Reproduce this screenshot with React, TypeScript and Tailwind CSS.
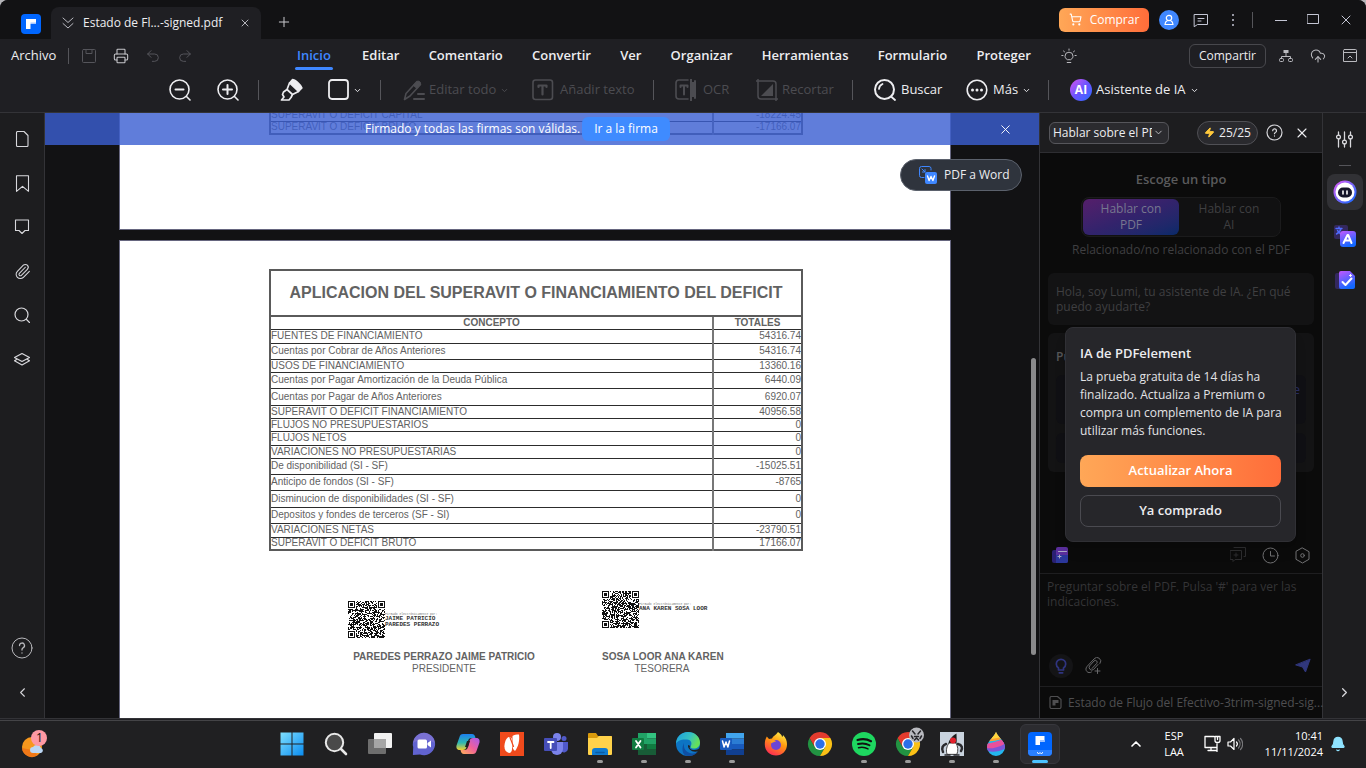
import type { ReactNode } from 'react';
import {
  Bell,
  ChevronDown,
  ChevronLeft,
  ChevronRight,
  ChevronUp,
  CloudUpload,
  Paperclip,
  Plus,
  Printer,
  Redo2,
  ShoppingCart,
  Undo2,
  X,
  Zap,
} from 'lucide-react';

function Svg({ size, box = 24, children, className = '' }: { size: number; box?: number; children: ReactNode; className?: string }) {
  return (
    <svg
      width={size}
      height={size}
      viewBox={`0 0 ${box} ${box}`}
      fill="none"
      stroke="currentColor"
      strokeLinecap="round"
      strokeLinejoin="round"
      className={`shrink-0 ${className}`}
      aria-hidden="true"
    >
      {children}
    </svg>
  );
}

function Divider({ className = '' }: { className?: string }) {
  return <span className={`w-px shrink-0 bg-[#55555a] ${className}`} />;
}

function IconButton({ label, className = '', children }: { label: string; className?: string; children: ReactNode }) {
  return (
    <button type="button" aria-label={label} className={`flex shrink-0 items-center justify-center ${className}`}>
      {children}
    </button>
  );
}

/* ---------- Title bar ---------- */

function TitleBar() {
  return (
    <header className="flex h-[39px] shrink-0 items-center bg-[#121214]">
      <div className="flex w-[51px] shrink-0 items-center justify-end self-stretch pt-2 pr-[10px]">
        <Svg size={20} box={20}>
          <rect width="20" height="20" rx="4" fill="#0066ff" stroke="none" />
          <path d="M5 5h10v5H9.500v5H5z" fill="#fff" stroke="none" />
          <path d="M9.500 8.500H15v1.500H9.500z" fill="#a9c9ff" stroke="none" />
        </Svg>
      </div>
      <div className="mt-auto flex h-8 w-[210px] shrink-0 items-center rounded-t-lg bg-[#1f1f23] pr-1 pl-[10px]">
        <Svg size={14} box={14} className="text-[#b9b9c0]">
          <path d="M2 2l5 4.500L12 2M2 7.500L7 12l5-4.500" />
        </Svg>
        <span className="flex-1 pl-2 text-[12px] whitespace-nowrap text-[#ededf0]">Estado de Fl...-signed.pdf</span>
        <IconButton label="Cerrar pestaña" className="size-6 text-[#b5b5bb]">
          <X size={12} strokeWidth={2} />
        </IconButton>
      </div>
      <IconButton label="Nueva pestaña" className="mt-1 ml-[11px] size-6 text-[#c9c9ce]">
        <Plus size={16} strokeWidth={1.5} />
      </IconButton>
      <div className="ml-auto flex items-center text-[#c4c6d4]">
        <button
          type="button"
          className="flex h-6 w-[90px] items-center justify-center gap-2 rounded-md bg-linear-to-r from-[#ffa757] to-[#ff6d3a] text-[12px] font-medium text-white"
        >
          <ShoppingCart size={13} strokeWidth={2} />
          Comprar
        </button>
        <IconButton label="Cuenta" className="ml-[10px] size-5 rounded-full bg-[#3f87ff] text-white">
          <Svg size={12} box={12}>
            <circle cx="6" cy="4" r="2.700" strokeWidth="1.200" />
            <path d="M4.500 6.500C2.500 7.500 2 9 2 10.500h8c0-1.500-.5-3-2.500-4" strokeWidth="1.200" />
          </Svg>
        </IconButton>
        <IconButton label="Comentarios" className="ml-[10px] size-6">
          <Svg size={16} box={16}>
            <path d="M1.500 2.500h13v10H4.500L1.500 14.500zM5 6.500h6M5 9h3" />
          </Svg>
        </IconButton>
        <IconButton label="Más opciones" className="ml-2 size-6">
          <Svg size={14} box={14}>
            <path d="M7 2v.01M7 7v.01M7 12v.01" strokeWidth="2" />
          </Svg>
        </IconButton>
        <Divider className="mr-2 ml-[7px] h-4" />
        <IconButton label="Minimizar" className="ml-2 size-6">
          <Svg size={12} box={12}>
            <path d="M0 6.500h12" />
          </Svg>
        </IconButton>
        <IconButton label="Maximizar" className="ml-2 size-6">
          <Svg size={13} box={13}>
            <rect x=".5" y="1.500" width="11" height="9" />
          </Svg>
        </IconButton>
        <IconButton label="Cerrar" className="mr-2 ml-[9px] size-6">
          <X size={16} strokeWidth={1.5} />
        </IconButton>
      </div>
    </header>
  );
}

/* ---------- Menu row ---------- */

const MENUS = ['Inicio', 'Editar', 'Comentario', 'Convertir', 'Ver', 'Organizar', 'Herramientas', 'Formulario', 'Proteger'];

function MenuBar() {
  return (
    <div className="flex h-[34px] shrink-0 items-center">
      <button type="button" className="ml-[11px] w-[57px] text-left text-[13px] text-[#ededf0]">
        Archivo
      </button>
      <Divider className="h-4" />
      <div className="flex w-[226px] shrink-0 items-center pl-1">
        <IconButton label="Guardar" className="h-6 w-8 text-[#55555b]">
          <Svg size={16} box={16}>
            <path d="M2.500 1.500h11a1 1 0 0 1 1 1v11a1 1 0 0 1-1 1h-11a1 1 0 0 1-1-1v-11a1 1 0 0 1 1-1zM5 1.500v4h6v-4" />
          </Svg>
        </IconButton>
        <IconButton label="Imprimir" className="h-6 w-8 text-[#c6c6ca]">
          <Printer size={16} strokeWidth={1.6} />
        </IconButton>
        <IconButton label="Deshacer" className="h-6 w-8 text-[#55555b]">
          <Undo2 size={16} strokeWidth={1.5} />
        </IconButton>
        <IconButton label="Rehacer" className="h-6 w-8 text-[#55555b]">
          <Redo2 size={16} strokeWidth={1.5} />
        </IconButton>
      </div>
      <nav className="flex w-[736px] shrink-0 justify-between self-stretch">
        {MENUS.map((name, i) => (
          <a
            key={name}
            href="#"
            className={
              i === 0
                ? 'relative flex items-center px-[2px] text-[13px] font-semibold text-[#3f87ff]'
                : 'flex items-center text-[13px] font-semibold text-[#ededf0]'
            }
          >
            {name}
            {i === 0 && <span className="absolute inset-x-0 bottom-[3px] h-[3px] rounded-full bg-[#3f87ff]" />}
          </a>
        ))}
      </nav>
      <IconButton label="Sugerencias" className="ml-[26px] size-6 text-[#b9b9be]">
        <Svg size={16} box={16}>
          <path d="M6 11.500C4.500 10.500 4 9.300 4 8.200a4 4 0 0 1 8 0c0 1.100-.5 2.300-2 3.300zM6.200 14.500h3.600M8 1v1.200M2.500 3l1 .8M13.500 3l-1 .8M.8 7.500H2M14 7.500h1.200" />
        </Svg>
      </IconButton>
      <div className="ml-auto flex items-center text-[#b9b9be]">
        <button type="button" className="mr-1 h-6 w-[77px] rounded-md border border-[#48484d] text-[12px] font-medium text-[#ededf0]">
          Compartir
        </button>
        <IconButton label="Organigrama" className="h-6 w-8">
          <Svg size={16} box={16}>
            <rect x="5.500" y="2" width="5" height="3" fill="currentColor" stroke="none" />
            <path d="M8 5v3.500M3.500 10.500v-2h9v2" />
            <rect x="1.500" y="10.500" width="4" height="3" rx="1" />
            <rect x="10.500" y="10.500" width="4" height="3" rx="1" />
          </Svg>
        </IconButton>
        <IconButton label="Subir a la nube" className="h-6 w-8">
          <CloudUpload size={16} strokeWidth={1.6} />
        </IconButton>
        <IconButton label="Contraer cinta" className="h-6 w-8">
          <Svg size={16} box={16}>
            <path d="M2.500 1.500h11a1 1 0 0 1 1 1v11h-13v-11a1 1 0 0 1 1-1zM1.500 4.500h13M6 10l2-2 2 2" />
          </Svg>
        </IconButton>
      </div>
    </div>
  );
}

/* ---------- Tool row ---------- */

const toolBtn = 'flex shrink-0 items-center gap-[6px] text-[13px] whitespace-nowrap';

function ToolBar() {
  return (
    <div className="flex h-[39px] shrink-0 items-center pb-[5px] pl-[168px] text-[#ededf0]">
      <IconButton label="Alejar" className="w-6">
        <Svg size={22} box={22}>
          <circle cx="10.500" cy="10.500" r="9.500" strokeWidth="1.600" />
          <path d="M17.500 17.500l3.500 3.500" strokeWidth="1.600" />
          <path d="M6.500 10.500h8" strokeWidth="2" />
        </Svg>
      </IconButton>
      <IconButton label="Acercar" className="ml-6 w-6">
        <Svg size={22} box={22}>
          <circle cx="10.500" cy="10.500" r="9.500" strokeWidth="1.600" />
          <path d="M17.500 17.500l3.500 3.500" strokeWidth="1.600" />
          <path d="M6 10.500h9M10.500 6v9" strokeWidth="2" />
        </Svg>
      </IconButton>
      <Divider className="ml-[18px] h-5" />
      <IconButton label="Resaltar" className="ml-[21px] w-6">
        <Svg size={24}>
          <path d="M12.500 1.500c2.500 0 8.500 5 9.500 8.500l-3.500 3.500L9.500 5z" fill="currentColor" strokeWidth="1.400" />
          <path d="M9.500 5L7 11.500l5.500 5 6-3M7 11.500L3.500 14l-1 2.500L4 19l-2.500 3H9l2-2.500 1.500-3" strokeWidth="1.700" />
        </Svg>
      </IconButton>
      <button type="button" aria-label="Formas" className="ml-6 flex w-9 shrink-0 items-center gap-[3px]">
        <Svg size={22} box={22}>
          <rect x="1" y="1" width="19" height="19" rx="3" strokeWidth="1.800" />
        </Svg>
        <ChevronDown size={9} strokeWidth={2.5} className="shrink-0" />
      </button>
      <Divider className="ml-4 h-5" />
      <button type="button" disabled className={`${toolBtn} ml-[22px] w-[108px] text-[#4c4c51]`}>
        <Svg size={22} box={22}>
          <path d="M1.500 20.500l1.500-6L14 2.500l3.500 3L7 17z" strokeWidth="1.600" />
          <path d="M14 2.500c1-1.500 4.500.5 3.500 3L14 9.500l-3.500-3z" fill="currentColor" />
          <path d="M15 15h6M11 20h10" strokeWidth="2" />
        </Svg>
        <span className="-ml-[2px] flex items-center gap-1">
          Editar todo
          <ChevronDown size={9} strokeWidth={2.5} />
        </span>
      </button>
      <button type="button" disabled className={`${toolBtn} ml-[21px] w-[104px] text-[#4c4c51]`}>
        <Svg size={22} box={22}>
          <rect x="1" y="1" width="19.500" height="19.500" rx="2.500" strokeWidth="1.600" />
          <path d="M6.500 8V6.500h8V8M10.500 6.500v9" strokeWidth="2.200" />
        </Svg>
        Añadir texto
      </button>
      <Divider className="ml-[17px] h-5" />
      <button type="button" disabled className={`${toolBtn} ml-[21px] w-14 text-[#4c4c51]`}>
        <Svg size={22} box={22}>
          <path d="M13 20H4a3 3 0 0 1-3-3V4a3 3 0 0 1 3-3h9M1 5v2M1 14v2" strokeWidth="1.600" />
          <path d="M5.500 8V6.500h7V8M9 6.500v9" strokeWidth="2" />
          <path d="M16 0v22M20 2v17" strokeWidth="2" />
          <path d="M16 3h4v15h-4z" fill="currentColor" stroke="none" />
        </Svg>
        OCR
      </button>
      <button type="button" disabled className={`${toolBtn} ml-[25px] w-[78px] text-[#4c4c51]`}>
        <Svg size={22} box={22}>
          <path d="M0 2h17a3 3 0 0 1 3 3v17M2 0v17a3 3 0 0 0 3 3h17" strokeWidth="1.500" />
          <path d="M17 5v12H5z" fill="currentColor" stroke="none" />
        </Svg>
        <span className="-ml-[2px]">Recortar</span>
      </button>
      <Divider className="ml-[18px] h-5" />
      <button type="button" className={`${toolBtn} ml-[21px] w-[70px]`}>
        <Svg size={22} box={22}>
          <circle cx="10.500" cy="10.500" r="9.500" strokeWidth="2" />
          <path d="M17 17.500l4 3.500M5 10a6 6 0 0 1 3.500-5" strokeWidth="1.800" />
        </Svg>
        <span className="-ml-px">Buscar</span>
      </button>
      <button type="button" className={`${toolBtn} ml-[22px] w-[64px]`}>
        <Svg size={22} box={22}>
          <circle cx="11" cy="11" r="9.800" strokeWidth="1.600" />
          <path d="M6.500 11v.01M11 11v.01M15.500 11v.01" strokeWidth="3" />
        </Svg>
        <span className="-ml-px flex items-center gap-1">
          Más
          <ChevronDown size={9} strokeWidth={2.5} />
        </span>
      </button>
      <Divider className="ml-[18px] h-5" />
      <button type="button" className={`${toolBtn} ml-[21px]`}>
        <span className="flex size-[22px] items-center justify-center rounded-full bg-linear-to-br from-[#d44df0] via-[#6a52ff] to-[#0a6bff] text-[12px] font-bold text-white">
          AI
        </span>
        <span className="-ml-[2px] flex items-center gap-1">
          Asistente de IA
          <ChevronDown size={9} strokeWidth={2.5} />
        </span>
      </button>
    </div>
  );
}

/* ---------- Left rail ---------- */

function LeftRail() {
  const cell = 'h-11 w-full';
  return (
    <aside className="flex w-[45px] shrink-0 flex-col border-r border-[#333337] bg-[#1d1d1f] py-1 text-[#d8d8dc]">
      <IconButton label="Miniaturas" className={cell}>
        <Svg size={16} box={16}>
          <path d="M3.500 .5h6.500l4 4v10a1 1 0 0 1-1 1H3.500a1 1 0 0 1-1-1v-13a1 1 0 0 1 1-1z" strokeWidth="1.100" />
        </Svg>
      </IconButton>
      <IconButton label="Marcadores" className={cell}>
        <Svg size={17} box={17}>
          <path d="M2.500 .8h12v15.500l-6-5-6 5z" strokeWidth="1.100" />
        </Svg>
      </IconButton>
      <IconButton label="Comentarios" className={cell}>
        <Svg size={16} box={16}>
          <path d="M1.500 1h13v10.500H11L8 14.500l-3-3H1.500z" strokeWidth="1.100" />
        </Svg>
      </IconButton>
      <IconButton label="Adjuntos" className={cell}>
        <Paperclip size={17} strokeWidth={1.5} />
      </IconButton>
      <IconButton label="Buscar" className={cell}>
        <Svg size={16} box={16}>
          <circle cx="7.500" cy="7.500" r="6.500" strokeWidth="1.200" />
          <path d="M12.500 12.500l3 3" strokeWidth="1.200" />
        </Svg>
      </IconButton>
      <IconButton label="Capas" className={cell}>
        <Svg size={16} box={16}>
          <path d="M8 2.500l7.500 4L8 10.500l-7.500-4zM3 8.300L.5 9.800 8 14l7.500-4.200L13 8.300" strokeWidth="1.200" />
        </Svg>
      </IconButton>
      <div className="mt-auto" />
      <IconButton label="Ayuda" className={cell}>
        <Svg size={22} box={22} className="text-[#b8b8bc]">
          <circle cx="11" cy="11" r="10" />
          <path d="M8.500 8.500a2.500 2.500 0 1 1 3.500 2.300c-.8.400-1 .8-1 1.700v.5M11 16v.01" strokeWidth="1.300" />
        </Svg>
      </IconButton>
      <IconButton label="Contraer" className={cell}>
        <ChevronLeft size={15} strokeWidth={1.7} />
      </IconButton>
    </aside>
  );
}

/* ---------- Document ---------- */

type Row = { name: string; value: string; height: string };

const PREVIOUS_ROWS: Row[] = [
  { name: 'SUPERAVIT O DEFICIT CAPITAL', value: '-18224.45', height: 'h-[13px]' },
  { name: 'SUPERAVIT O DEFICIT BRUTO', value: '-17166.07', height: 'h-[13px]' },
];

const ROWS: Row[] = [
  { name: 'FUENTES DE FINANCIAMIENTO', value: '54316.74', height: 'h-[14px]' },
  { name: 'Cuentas por Cobrar de Años Anteriores', value: '54316.74', height: 'h-[16px]' },
  { name: 'USOS DE FINANCIAMIENTO', value: '13360.16', height: 'h-[13px]' },
  { name: 'Cuentas por Pagar Amortización de la Deuda Pública', value: '6440.09', height: 'h-[16px]' },
  { name: 'Cuentas por Pagar de Años Anteriores', value: '6920.07', height: 'h-[17px]' },
  { name: 'SUPERAVIT O DEFICIT FINANCIAMIENTO', value: '40956.58', height: 'h-[13px]' },
  { name: 'FLUJOS NO PRESUPUESTARIOS', value: '0', height: 'h-[13px]' },
  { name: 'FLUJOS NETOS', value: '0', height: 'h-[14px]' },
  { name: 'VARIACIONES NO PRESUPUESTARIAS', value: '0', height: 'h-[13px]' },
  { name: 'De disponibilidad (SI - SF)', value: '-15025.51', height: 'h-[16px]' },
  { name: 'Anticipo de fondos (SI - SF)', value: '-8765', height: 'h-[16px]' },
  { name: 'Disminucion de disponibilidades (SI - SF)', value: '0', height: 'h-[17px]' },
  { name: 'Depositos y fondes de terceros (SF - SI)', value: '0', height: 'h-[16px]' },
  { name: 'VARIACIONES NETAS', value: '-23790.51', height: 'h-[14px]' },
  { name: 'SUPERAVIT O DEFICIT BRUTO', value: '17166.07', height: 'h-[13px]' },
];

function TableRows({ rows }: { rows: Row[] }) {
  return (
    <>
      {rows.map((r) => (
        <tr key={r.name} className={r.height}>
          <td className="border-y border-[#2c2c2c] p-0">{r.name}</td>
          <td className="border-y border-l-2 border-y-[#2c2c2c] border-l-[#777] p-0 text-right">{r.value}</td>
        </tr>
      ))}
    </>
  );
}

const tableClass =
  "ml-[149px] w-[534px] table-fixed border-collapse border-2 border-[#5a5a5a] font-['Liberation_Sans',Arial,sans-serif] text-[10px] leading-[10px] text-[#626262]";

function QrCode({ seed, label }: { seed: number; label: string }) {
  const n = 37;
  let s = seed;
  let d = '';
  const inFinder = (x: number, y: number) => (x < 8 && y < 8) || (x > n - 9 && y < 8) || (x < 8 && y > n - 9);
  for (let y = 0; y < n; y++) {
    for (let x = 0; x < n; x++) {
      s = (s * 1103515245 + 12345) % 2147483648;
      if (!inFinder(x, y) && s / 2147483648 > 0.46) d += `M${x} ${y}h1v1h-1z`;
    }
  }
  const finders = [
    [0, 0],
    [n - 7, 0],
    [0, n - 7],
  ];
  return (
    <svg width="37" height="37" viewBox="0 0 37 37" role="img" aria-label={label} className="shrink-0">
      <path d={d} fill="#111" />
      {finders.map(([x, y]) => (
        <g key={`${x}-${y}`}>
          <rect x={x + 0.5} y={y + 0.5} width="6" height="6" fill="none" stroke="#111" />
          <rect x={x + 2} y={y + 2} width="3" height="3" fill="#111" />
        </g>
      ))}
    </svg>
  );
}

function Signature({ seed, lines, name, role, className }: { seed: number; lines: string[]; name: string; role: string; className: string }) {
  return (
    <div className={`flex shrink-0 flex-col ${className}`}>
      <div className="flex">
        <QrCode seed={seed} label={`Código de firma de ${name}`} />
        <div className="pt-3 font-['Liberation_Mono',monospace] text-[6px] leading-[6px] font-bold whitespace-nowrap text-[#333]">
          <p className="text-[3px] leading-[3px] font-normal text-[#777]">Firmado electrónicamente por:</p>
          {lines.map((l) => (
            <p key={l}>{l}</p>
          ))}
        </div>
      </div>
      <div className="mt-auto text-center text-[10px] leading-3 whitespace-nowrap text-[#626262]">
        <p className="font-bold">{name}</p>
        <p>{role}</p>
      </div>
    </div>
  );
}

function DocumentArea() {
  return (
    <main className="relative min-w-0 flex-1 overflow-hidden bg-[#121214]">
      <div className="flex h-full flex-col gap-[10px] pr-[88px] pl-[74px] font-['Liberation_Sans',Arial,sans-serif]">
        <section className="h-[117px] shrink-0 overflow-hidden border border-t-0 border-[#66667f] bg-white">
          <table className={`${tableClass} -mt-[6px]`}>
            <colgroup>
              <col />
              <col className="w-[89px]" />
            </colgroup>
            <tbody>
              <TableRows rows={PREVIOUS_ROWS} />
            </tbody>
          </table>
        </section>
        <section className="flex min-h-0 flex-1 flex-col overflow-hidden border border-b-0 border-[#66667f] bg-white pt-7">
          <table className={tableClass}>
            <colgroup>
              <col />
              <col className="w-[89px]" />
            </colgroup>
            <thead>
              <tr className="h-[46px]">
                <th colSpan={2} className="border-b-2 border-[#5a5a5a] p-0 text-[16px] font-bold">
                  APLICACION DEL SUPERAVIT O FINANCIAMIENTO DEL DEFICIT
                </th>
              </tr>
              <tr className="h-[13px]">
                <th className="border-b border-[#2c2c2c] p-0">CONCEPTO</th>
                <th className="border-b border-l-2 border-b-[#2c2c2c] border-l-[#777] p-0">TOTALES</th>
              </tr>
            </thead>
            <tbody>
              <TableRows rows={ROWS} />
            </tbody>
          </table>
          <div className="flex pt-10 pl-[228px]">
            <Signature
              seed={7}
              lines={['JAIME PATRICIO', 'PAREDES PERRAZO']}
              name="PAREDES PERRAZO JAIME PATRICIO"
              role="PRESIDENTE"
              className="mr-[62px] h-[84px] w-[192px] pt-[10px]"
            />
            <Signature
              seed={91}
              lines={['ANA KAREN SOSA LOOR']}
              name="SOSA LOOR ANA KAREN"
              role="TESORERA"
              className="h-[84px] w-[120px]"
            />
          </div>
        </section>
      </div>

      <div role="status" className="absolute inset-x-0 top-0 flex h-8 items-center bg-[#3b5fd1]/81 pl-[320px] text-[12px] text-white">
        <span className="w-[217px] shrink-0 whitespace-nowrap">Firmado y todas las firmas son válidas.</span>
        <button type="button" className="h-6 w-[88px] rounded-md bg-[#3f8bff] font-medium">
          Ir a la firma
        </button>
        <IconButton label="Cerrar aviso" className="mr-[22px] ml-auto size-6">
          <X size={15} strokeWidth={1.5} />
        </IconButton>
      </div>

      <button
        type="button"
        className="absolute top-[46px] right-[17px] flex h-8 w-[122px] items-center gap-[7px] rounded-full border border-[#5b616c] bg-[#2f343d] pl-[18px] text-[12px] whitespace-nowrap text-[#ededf0]"
      >
        <Svg size={18} box={18}>
          <path d="M5 11.500H2.500a2 2 0 0 1-2-2V2.500a2 2 0 0 1 2-2H10a2 2 0 0 1 2 2V4M3 3l3 3M6 3.500V6H3.500" stroke="#3f87ff" />
          <rect x="6" y="6" width="12" height="12" rx="2" fill="#3f87ff" stroke="none" />
          <path d="M8.500 10l1.600 4.500L12 10.500l1.900 4L15.500 10" stroke="#fff" strokeWidth="1.400" />
        </Svg>
        PDF a Word
      </button>

      <span aria-hidden="true" className="absolute top-[245px] right-[3px] h-[297px] w-[5px] rounded-full bg-[#8a8a8c]" />
    </main>
  );
}

/* ---------- AI panel ---------- */

function UpgradeDialog() {
  return (
    <div
      role="dialog"
      aria-labelledby="upgrade-title"
      className="absolute top-[214px] left-[25px] flex h-[215px] w-[231px] flex-col rounded-lg border border-[#303035] bg-[#26262a] px-[14px] pt-4 pb-[14px] shadow-lg"
    >
      <h2 id="upgrade-title" className="text-[13px] leading-[18px] font-semibold text-[#ededf0]">
        IA de PDFelement
      </h2>
      <p className="mt-[6px] text-[12px] leading-[18px] whitespace-nowrap text-[#e3e3e6]">
        La prueba gratuita de 14 días ha
        <br />
        finalizado. Actualiza a Premium o
        <br />
        compra un complemento de IA para
        <br />
        utilizar más funciones.
      </p>
      <button
        type="button"
        className="mt-auto h-8 shrink-0 rounded-lg bg-linear-to-r from-[#ffa757] to-[#ff6d3a] text-[13px] font-semibold text-white"
      >
        Actualizar Ahora
      </button>
      <button type="button" className="mt-2 h-8 shrink-0 rounded-lg border border-[#4a4a50] text-[13px] font-semibold text-[#ededf0]">
        Ya comprado
      </button>
    </div>
  );
}

function AiPanel() {
  return (
    <section className="relative flex w-[283px] shrink-0 flex-col border-l border-[#333337] bg-[#0b0b0b]">
      <div className="flex h-10 shrink-0 items-center border-b border-[#2e2e32] bg-[#1d1d1f] pl-[9px]">
        <div className="relative flex items-center">
          <select
            aria-label="Modo de chat"
            className="h-[22px] w-[120px] appearance-none rounded-md border border-[#56565b] bg-[#2b2b2f] pr-4 pl-[3px] text-[12px] leading-4 text-[#ededf0]"
          >
            <option>Hablar sobre el PDF</option>
          </select>
          <ChevronDown size={11} strokeWidth={2} className="pointer-events-none absolute right-[5px] text-[#c4c4c8]" />
        </div>
        <button
          type="button"
          className="ml-7 flex h-6 w-[61px] items-center justify-center gap-1 rounded-full border border-[#505055] bg-[#2a2a2e] text-[12px] text-[#ededf0]"
        >
          <Zap size={11} fill="#ffc93c" className="text-[#ffc93c]" />
          25/25
        </button>
        <IconButton label="Ayuda" className="ml-1 size-6 text-[#d6d6da]">
          <Svg size={17} box={17}>
            <circle cx="8.500" cy="8.500" r="7.500" strokeWidth="1.200" />
            <path d="M6.700 6.700a1.900 1.900 0 1 1 2.700 1.800c-.7.300-.9.600-.9 1.200M8.500 12v.01" strokeWidth="1.300" />
          </Svg>
        </IconButton>
        <IconButton label="Cerrar panel" className="ml-1 size-6 text-[#ededf0]">
          <X size={16} strokeWidth={1.7} />
        </IconButton>
      </div>

      <div className="flex flex-1 flex-col px-2 text-[12px] text-[#3f3f41]">
        <h2 className="pt-4 text-center text-[13px] leading-5 font-semibold text-[#5a5a5c]">Escoge un tipo</h2>
        <div className="mx-auto mt-2 flex h-10 w-[200px] rounded-lg border border-[#1b1b1c] bg-[#111112] p-px leading-4">
          <button type="button" className="w-24 rounded-md bg-linear-to-br from-[#551e6b] via-[#33236c] to-[#072a69] text-[#77778f]">
            Hablar con
            <br />
            PDF
          </button>
          <button type="button" className="flex-1">
            Hablar con
            <br />
            AI
          </button>
        </div>
        <p className="mt-1 text-center leading-[18px] whitespace-nowrap">Relacionado/no relacionado con el PDF</p>
        <p className="mt-[14px] rounded-md bg-[#131314] px-2 py-[11px] leading-[15px] whitespace-nowrap">
          Hola, soy Lumi, tu asistente de IA. ¿En qué
          <br />
          puedo ayudarte?
        </p>
        <div className="mt-2 h-[139px] rounded-md bg-[#131314] px-2 pt-[15px]">
          <p className="leading-[18px] font-semibold text-[#565658]">Pu</p>
          <div className="mt-[9px] h-[49px] rounded-md bg-[#101014] px-[6px] pt-[6px] text-right leading-[18px] text-[#2a2f66]">e</div>
          <div className="mt-[9px] h-[30px] rounded-md bg-[#101014]" />
        </div>
        <div className="mt-auto flex h-9 items-center text-[#717173]">
          <IconButton label="Indicaciones" className="ml-1 size-4">
            <Svg size={16} box={16}>
              <rect x="0" y="3" width="8" height="13" rx="2" fill="#2a2173" stroke="none" />
              <path d="M6 0h8a2 2 0 0 1 2 2v12a2 2 0 0 1-2 2H4V2a2 2 0 0 1 2-2z" fill="#5a2f9c" stroke="none" />
              <path d="M4 8h12v6a2 2 0 0 1-2 2H4z" fill="#173a9b" stroke="none" opacity=".7" />
              <path d="M6.500 4.500h8" stroke="#a9a9c4" />
              <path d="M7.500 8v3M6 9.500h3" stroke="#a9a9c4" />
            </Svg>
          </IconButton>
          <IconButton label="Nuevo chat" className="ml-auto h-6 w-8 text-[#2d2d2f]">
            <Svg size={16} box={16}>
              <path d="M.5 3.500h11v9H5l-2 2v-2H.5zM4 .5h11.500v9H14M6 6v4M4 8h4" />
            </Svg>
          </IconButton>
          <IconButton label="Historial" className="h-6 w-8">
            <Svg size={17} box={17}>
              <circle cx="8.500" cy="8.500" r="7.500" />
              <path d="M8.500 4.500v4.500h4" />
            </Svg>
          </IconButton>
          <IconButton label="Ajustes" className="-mr-1 h-6 w-8">
            <Svg size={17} box={17}>
              <path d="M8.500 1l6.500 3.700v7.600L8.500 16 2 12.300V4.700z" />
              <circle cx="8.500" cy="8.500" r="1.800" />
            </Svg>
          </IconButton>
        </div>
      </div>

      <div className="flex h-[113px] shrink-0 flex-col border-t border-[#1e1e20] px-[7px] pt-[5px]">
        <textarea
          aria-label="Pregunta"
          placeholder={"Preguntar sobre el PDF. Pulsa '#' para ver las\nindicaciones."}
          className="w-full flex-1 resize-none overflow-hidden bg-transparent text-[12px] leading-[15px] whitespace-pre text-[#737375] placeholder:text-[#343436]"
        />
        <div className="flex h-9 items-center pb-1">
          <IconButton label="Ideas" className="ml-[2px] size-6 rounded-full bg-[#141416] text-[#2f347f]">
            <Svg size={16} box={16}>
              <path d="M5.500 10C4 9 3.300 7.500 3.300 6a4.700 4.700 0 0 1 9.400 0c0 1.500-.7 3-2.200 4v2h-5zM6.300 14.800h3.400" strokeWidth="1.700" />
            </Svg>
          </IconButton>
          <IconButton label="Adjuntar" className="ml-2 size-6 text-[#68686a]">
            <Svg size={18} box={18}>
              <path d="M14 7.500L9.500 12.500a2.700 2.700 0 0 1-4-3.500L10 4a1.800 1.800 0 0 1 2.700 2.400L8 11.500M16 6.500a3.500 3.500 0 0 0-6-4.500L3 9.500c-3 3.500 1 8 4.500 5.500M13.500 11.500v5M11 14h5" />
            </Svg>
          </IconButton>
          <IconButton label="Enviar" className="ml-auto size-6 text-[#30377c]">
            <Svg size={16} box={16}>
              <path d="M15 1.500L10.500 14 7.500 9 1 7z" fill="currentColor" />
            </Svg>
          </IconButton>
        </div>
      </div>

      <div className="flex h-8 shrink-0 items-center gap-[6px] border-t border-[#1e1e20] px-[9px] text-[#4e4e50]">
        <Svg size={13} box={13}>
          <path d="M2.500 .5h6l3.500 3v7.500a1.500 1.500 0 0 1-1.500 1.500h-8A1.500 1.500 0 0 1 1 11V2A1.500 1.500 0 0 1 2.500 .5z" strokeWidth="1.200" />
          <path d="M3.500 4h6v3h-3v2.500h-3z" fill="currentColor" stroke="none" />
        </Svg>
        <span className="text-[12px] whitespace-nowrap">Estado de Flujo del Efectivo-3trim-signed-sig...</span>
      </div>
      <UpgradeDialog />
    </section>
  );
}

/* ---------- Right rail ---------- */

function RightRail() {
  return (
    <aside className="flex w-11 shrink-0 flex-col items-center border-l border-[#333337] bg-[#1d1d1f] py-1">
      <IconButton label="Propiedades" className="h-11 w-full text-[#d8d8dc]">
        <Svg size={17} box={17}>
          <path d="M2.500 1v3M2.500 8v8M8.500 1v8M8.500 13v3M14.500 1v3M14.500 8v8" strokeWidth="1.300" />
          <circle cx="2.500" cy="6" r="1.900" strokeWidth="1.300" />
          <circle cx="8.500" cy="11" r="1.900" strokeWidth="1.300" />
          <circle cx="14.500" cy="6" r="1.900" strokeWidth="1.300" />
        </Svg>
      </IconButton>
      <span className="mt-1 h-px w-3 bg-[#55555a]" />
      <IconButton label="Lumi" className="mt-2 size-9 rounded-lg bg-[#313135]">
        <Svg size={24}>
          <defs>
            <linearGradient id="lumi" x1="0" y1="0" x2="1" y2="1">
              <stop offset="0" stopColor="#e45cf5" />
              <stop offset="1" stopColor="#0a6bff" />
            </linearGradient>
          </defs>
          <circle cx="12" cy="12" r="11.500" fill="url(#lumi)" stroke="none" />
          <circle cx="12" cy="12" r="9.500" fill="#fff" stroke="none" />
          <rect x="5" y="7.500" width="14" height="10" rx="5" fill="#16162a" stroke="none" />
          <path d="M10 11v3M14 11v3" stroke="#fff" strokeWidth="1.600" />
        </Svg>
      </IconButton>
      <IconButton label="Traducir" className="mt-1 h-11 w-full">
        <Svg size={22} box={22}>
          <defs>
            <linearGradient id="tool" x1="0" y1="0" x2=".4" y2="1">
              <stop offset="0" stopColor="#c457ff" />
              <stop offset="1" stopColor="#1268ff" />
            </linearGradient>
          </defs>
          <rect width="14" height="14" rx="2" fill="#33285e" stroke="none" />
          <path d="M2 3.500h6M5 2v1.500M7 3.500C6.500 6 4.500 8 2.500 9M3.500 5.500L6.500 9" stroke="#4f6bff" strokeWidth="1.400" />
          <rect x="6" y="6" width="16" height="16" rx="3" fill="url(#tool)" stroke="none" />
          <path d="M9.500 18l4-8h.7l3.300 8M11 15.500h5" stroke="#fff" strokeWidth="2" />
        </Svg>
      </IconButton>
      <IconButton label="Revisar" className="h-11 w-full">
        <Svg size={20} box={20}>
          <rect x="0" y="3" width="10" height="16" rx="2" fill="#33285e" stroke="none" />
          <path d="M6 1h9l5 5v11a2 2 0 0 1-2 2H6a2 2 0 0 1-2-2V3a2 2 0 0 1 2-2z" fill="url(#tool)" stroke="none" />
          <path d="M7.500 12l3 3 6-6.500" stroke="#fff" strokeWidth="2" />
          <path d="M15.500 4.500v2M14.500 5.500h2" stroke="#fff" />
        </Svg>
      </IconButton>
      <IconButton label="Expandir" className="mt-auto h-11 w-full text-[#d8d8dc]">
        <ChevronRight size={15} strokeWidth={2} />
      </IconButton>
    </aside>
  );
}

/* ---------- Taskbar ---------- */

function Chrome() {
  return (
    <>
      <path d="M1.600 6A12 12 0 0 0 12 24l5.200-9L12 12 6.800 15z" fill="#229342" stroke="none" />
      <path d="M1.600 6A12 12 0 0 1 22.400 6H12l-5.200 9z" fill="#e33b2e" stroke="none" />
      <path d="M22.400 6A12 12 0 0 1 12 24l5.200-9L12 6z" fill="#fbc116" stroke="none" />
      <circle cx="12" cy="12" r="6" fill="#fff" stroke="none" />
      <circle cx="12" cy="12" r="4.700" fill="#2b6fe8" stroke="none" />
    </>
  );
}

type App = { name: string; art: ReactNode; open?: boolean; active?: boolean };

const APPS: App[] = [
  {
    name: 'Inicio',
    art: (
      <>
        <defs>
          <linearGradient id="win" x1="0" y1="0" x2="1" y2="1">
            <stop offset="0" stopColor="#7fe0ff" />
            <stop offset="1" stopColor="#0a8cf0" />
          </linearGradient>
        </defs>
        <path d="M.5 .5h11v11H.5zM12.500 .5h11v11h-11zM.5 12.500h11v11H.5zM12.500 12.500h11v11h-11z" fill="url(#win)" stroke="none" />
      </>
    ),
  },
  {
    name: 'Buscar',
    art: (
      <>
        <circle cx="10.500" cy="10.500" r="8.700" fill="#4a4a4a" stroke="#e8e8e8" strokeWidth="2" />
        <path d="M17 17l5 5" stroke="#e8e8e8" strokeWidth="2.600" />
      </>
    ),
  },
  {
    name: 'Vista de tareas',
    art: (
      <>
        <rect x="6" y="1" width="18" height="15" rx="1" fill="#f2f2f2" stroke="none" />
        <rect x="0" y="7" width="18" height="15" rx="1" fill="#6e6e6e" stroke="none" />
        <path d="M6 7h12v9H6z" fill="#a6a6a6" stroke="none" />
      </>
    ),
  },
  {
    name: 'Chat',
    art: (
      <>
        <path d="M12 .8A11.200 11.200 0 1 1 8 22.500L.9 23 1.200 15A11.200 11.200 0 0 1 12 .8z" fill="#6163d0" stroke="none" />
        <path d="M12 .8A11.200 11.200 0 0 0 1 11c5-4 15-4 22 0A11.200 11.200 0 0 0 12 .8z" fill="#8a7bd6" stroke="none" opacity=".6" />
        <rect x="5.500" y="7.500" width="9.500" height="9" rx="1.500" fill="#fff" stroke="none" />
        <path d="M15.500 11l3.500-2.500v7L15.500 13z" fill="#fff" stroke="none" />
      </>
    ),
  },
  {
    name: 'Copilot',
    art: (
      <>
        <defs>
          <linearGradient id="cpa" x1="0" y1="0" x2="0" y2="1">
            <stop offset="0" stopColor="#1c7ff0" />
            <stop offset=".55" stopColor="#2fb8b0" />
            <stop offset="1" stopColor="#f3d02e" />
          </linearGradient>
          <linearGradient id="cpb" x1="1" y1="0" x2="0" y2="1">
            <stop offset="0" stopColor="#a65bf0" />
            <stop offset=".5" stopColor="#f0609a" />
            <stop offset="1" stopColor="#ffb357" />
          </linearGradient>
        </defs>
        <path d="M7 2h9c2 0 3 1.500 3.500 4h-4c-2 0-3 1-3.500 3l-1.500 6c-.5 2-1.500 3-3.500 3H4c-3 0-4-2-3.500-4.500L3.500 5C4 3 5 2 7 2z" fill="url(#cpa)" stroke="none" />
        <path d="M17 6h3c3 0 4 2 3.500 4.500L20.500 19c-.6 2-1.600 3-3.500 3H8c-2 0-3-1.500-3.500-4h4c2 0 3-1 3.500-3l1.500-6c.5-2 1.500-3 3.500-3z" fill="url(#cpb)" stroke="none" />
        <path d="M11 9h3l-2 6H9z" fill="#202020" stroke="none" />
      </>
    ),
  },
  {
    name: 'Nitro',
    art: (
      <>
        <rect width="24" height="24" fill="#f04a1c" stroke="none" />
        <path d="M9 5c2 0 3 1 3 3v9c0 2-1 4-3 4-3.500-1-5-4-4.500-8C5 9 6.500 5.500 9 5z" fill="#fff" stroke="none" />
        <path d="M12.500 4c1.500-1.500 4-1.500 6.500-1.500.7 6-.5 12-4 16.500-1.500-1-2.500-3-2.500-5z" fill="#fff" stroke="none" />
        <path d="M10 5.500l3.500 9" stroke="#f04a1c" strokeWidth="1.200" />
      </>
    ),
  },
  {
    name: 'Teams',
    art: (
      <>
        <circle cx="20" cy="6.500" r="2.500" fill="#5059c9" stroke="none" />
        <circle cx="13" cy="5" r="4" fill="#7b83eb" stroke="none" />
        <path d="M17 10h7v7a4 4 0 0 1-7 2z" fill="#5059c9" stroke="none" />
        <path d="M7 10h12v7a6 6 0 0 1-12 0z" fill="#7b83eb" stroke="none" />
        <rect x="0" y="6" width="13" height="13" rx="1" fill="#464eb8" stroke="none" />
        <path d="M4 10h5.500M6.700 10v6" stroke="#fff" strokeWidth="1.800" />
      </>
    ),
  },
  {
    name: 'Explorador de archivos',
    open: true,
    art: (
      <>
        <path d="M0 2a1 1 0 0 1 1-1h7l2 3h13a1 1 0 0 1 1 1v6H0z" fill="#d99a0c" stroke="none" />
        <path d="M0 6h9l2-2h12a1 1 0 0 1 1 1v17a1 1 0 0 1-1 1H1a1 1 0 0 1-1-1z" fill="#ffd24a" stroke="none" />
        <path d="M4 23v-4a3 3 0 0 1 3-3h10a3 3 0 0 1 3 3v4z" fill="#0f7bd0" stroke="none" />
        <path d="M8 20.500h8" stroke="#0a5ba3" strokeWidth="1.500" />
      </>
    ),
  },
  {
    name: 'Excel',
    open: true,
    art: (
      <>
        <path d="M6 1h9v11H6z" fill="#21a366" stroke="none" />
        <path d="M15 1h9v5.500h-9z" fill="#33c481" stroke="none" />
        <path d="M15 6.500h9V12h-9z" fill="#21a366" stroke="none" />
        <path d="M6 12h9v5.500H6zM6 17.500h18V23H6z" fill="#185c37" stroke="none" />
        <path d="M15 12h9v5.500h-9z" fill="#107c41" stroke="none" />
        <rect x="0" y="6" width="12" height="12" rx="1" fill="#107c41" stroke="none" />
        <path d="M4 9l4.500 6.500M8.500 9L4 15.500" stroke="#fff" strokeWidth="1.800" />
      </>
    ),
  },
  {
    name: 'Edge',
    open: true,
    art: (
      <>
        <defs>
          <linearGradient id="edge" x1="0" y1="0" x2="1" y2=".4">
            <stop offset="0" stopColor="#1b9de2" />
            <stop offset=".6" stopColor="#35c1c1" />
            <stop offset="1" stopColor="#66e05a" />
          </linearGradient>
        </defs>
        <circle cx="12" cy="12" r="12" fill="#0d74c4" stroke="none" />
        <path d="M0 12C0 5 5 0 12 0s12 5 12 10.500c0 4-3 6-6 6-3.500 0-4-1.500-3-3 1-2 .5-5.500-4-6C5 7 1 9 0 12z" fill="url(#edge)" stroke="none" />
        <path d="M8 11c-1 5 2 10 8 10.500 3 .3 5-1 6.500-2.500A12 12 0 0 1 12 24C5 24 6 14 8 11z" fill="#0f4fa3" stroke="none" />
        <path d="M14.500 14c-2 2 0 4 4 4 2 0 4-.8 5-2l-1 3c-5 2-11-1-10.500-6z" fill="#202020" stroke="none" />
      </>
    ),
  },
  {
    name: 'Word',
    open: true,
    art: (
      <>
        <path d="M6 1h18v5.500H6z" fill="#41a5ee" stroke="none" />
        <path d="M6 6.500h18V12H6z" fill="#2b7cd3" stroke="none" />
        <path d="M6 12h18v5.500H6z" fill="#185abd" stroke="none" />
        <path d="M6 17.500h18V23H6z" fill="#103f91" stroke="none" />
        <rect x="0" y="6" width="12" height="12" rx="1" fill="#185abd" stroke="none" />
        <path d="M2.500 9l1.600 6L6 10l1.900 5 1.600-6" stroke="#fff" strokeWidth="1.500" />
      </>
    ),
  },
  {
    name: 'Firefox',
    art: (
      <>
        <defs>
          <linearGradient id="fx" x1=".8" y1="0" x2=".3" y2="1">
            <stop offset="0" stopColor="#fff44f" />
            <stop offset=".45" stopColor="#ff980e" />
            <stop offset="1" stopColor="#ff2a55" />
          </linearGradient>
        </defs>
        <path d="M14 0c3 2 4 3.500 4 5 1-.5 1-1.500 1-2 3 3 4 6 4 9.500C23 19 18 23.500 12 23.500S.8 19 .8 12.500c0-3 .5-5.500 2-8L5 7l3-.5C9 4 12 3 14 0z" fill="url(#fx)" stroke="none" />
        <circle cx="12" cy="13" r="5" fill="#6b45d6" stroke="none" />
        <path d="M6 8c3-1.500 5 0 6 1.500-2 0-3 1.500-5 1.500z" fill="#ff9d1e" stroke="none" />
      </>
    ),
  },
  { name: 'Chrome', art: <Chrome /> },
  {
    name: 'Spotify',
    open: true,
    art: (
      <>
        <circle cx="12" cy="12" r="12" fill="#1ed760" stroke="none" />
        <path d="M5.500 8c4.500-1.300 9.500-1 13.500 1.200" stroke="#111" strokeWidth="2.200" />
        <path d="M6 12c4-1 8-.7 11.500 1.300" stroke="#111" strokeWidth="1.900" />
        <path d="M6.500 15.700c3.500-.8 6.500-.5 9.500 1.200" stroke="#111" strokeWidth="1.500" />
      </>
    ),
  },
  {
    name: 'Chrome, perfil 2',
    open: true,
    art: (
      <>
        <Chrome />
        <circle cx="20.500" cy="3" r="7.500" fill="#b9bac0" stroke="none" />
        <path d="M16.500 -1l2.500 3M24.500 -1l-2.500 3M18.500 4.500h4M18.500 8l2-2 2 2M15.500 4l1.500 2.500M25.500 4L24 6.500" stroke="#26262a" strokeWidth="1.500" />
      </>
    ),
  },
  {
    name: 'Java',
    open: true,
    art: (
      <>
        <rect width="24" height="24" fill="#c9d3de" stroke="none" />
        <path d="M3 20c-2-4 0-7 3-8M21 19c2-3 1-6-3-7" stroke="#2a2a2e" strokeWidth="2.500" />
        <path d="M7 22c-1.500-4 0-8 2-11h7c2 4 2.500 7 1 11z" fill="#fff" stroke="#444" />
        <path d="M8.500 11c1-4 5-8 8-9.500 0 4 .5 6.500 0 9.500z" fill="#1b1b1b" stroke="none" />
        <circle cx="13" cy="8.500" r="3" fill="#e3202c" stroke="none" />
        <path d="M5 23h5M14 23h5" stroke="#2a2a2e" strokeWidth="1.500" />
      </>
    ),
  },
  {
    name: 'Paint 3D',
    open: true,
    art: (
      <>
        <defs>
          <clipPath id="drop">
            <path d="M12 0c1 4 9 9 9 15a9 9 0 0 1-18 0C3 9 11 4 12 0z" />
          </clipPath>
        </defs>
        <g clipPath="url(#drop)" stroke="none">
          <rect width="24" height="24" fill="#23b6ee" />
          <path d="M0 14c6 0 12 1 24-7v8c-8 5-16 6-24 3z" fill="#7d55d8" />
          <path d="M0 11c6 1 12-1 24-6v5c-10 6-16 7-24 6z" fill="#e8509c" />
          <path d="M0 0h24v5C16 8 12 9 0 10z" fill="#ffa02e" />
          <path d="M6 0h12v5L8 7z" fill="#ffd53d" />
        </g>
      </>
    ),
  },
  {
    name: 'PDFelement',
    open: true,
    active: true,
    art: (
      <>
        <rect width="24" height="24" rx="4" fill="#0066ff" stroke="none" />
        <path d="M0 18h24v2a4 4 0 0 1-4 4H4a4 4 0 0 1-4-4z" fill="#2a80ff" stroke="none" />
        <path d="M7.500 4h9v6H12v3H7.500z" fill="#fff" stroke="none" />
        <path d="M12 8h4.500v2H12z" fill="#9dc3ff" stroke="none" />
        <path d="M9.500 20.500l1 1.500 1.500-1.500 1.500 1.500 1-1.500" stroke="#fff" />
      </>
    ),
  },
];

function Taskbar() {
  return (
    <footer className="flex h-12 shrink-0 items-stretch border-t border-[#444447] bg-[#202022] text-white">
      <div className="flex w-[270px] shrink-0 items-center pb-[2px] pl-[21px]">
        <IconButton label="Widgets, 1 aviso">
          <Svg size={28} box={28}>
            <circle cx="11" cy="17" r="10" fill="#f8981d" stroke="none" />
            <path d="M1 18a10 10 0 0 0 16 7l-6-5z" fill="#f07818" stroke="none" />
            <path d="M12 23a3 3 0 0 1 0-6 4.500 4.500 0 0 1 8 1 2.600 2.600 0 0 1 0 5z" fill="#bcd7f5" stroke="none" />
            <circle cx="18" cy="8" r="8" fill="#ff99a4" stroke="none" />
            <text x="18.500" y="12" textAnchor="middle" fontSize="12" fill="#111" stroke="none">
              1
            </text>
          </Svg>
        </IconButton>
      </div>
      <div className="flex shrink-0 items-center pb-[2px]">
        {APPS.map((app) => (
          <button
            key={app.name}
            type="button"
            aria-label={app.name}
            className={
              app.active
                ? 'mx-[2px] flex h-10 w-10 flex-col items-center rounded-md border border-[#37373c] bg-[#2c2c30] pt-[7px]'
                : 'flex h-10 w-11 flex-col items-center pt-2'
            }
          >
            <Svg size={24} className="overflow-visible">
              {app.art}
            </Svg>
            {app.open && (
              <span
                className={
                  app.active ? 'mt-1 h-[3px] w-4 shrink-0 rounded-full bg-[#4cc2ff]' : 'mt-1 h-[3px] w-[6px] shrink-0 rounded-full bg-[#9a9a9a]'
                }
              />
            )}
          </button>
        ))}
      </div>
      <div className="ml-auto flex items-center pr-5 pb-[2px]">
        <IconButton label="Iconos ocultos" className="w-6">
          <ChevronUp size={16} strokeWidth={2.5} />
        </IconButton>
        <button type="button" className="ml-2 w-9 text-center text-[11px] leading-4">
          ESP
          <br />
          LAA
        </button>
        <IconButton label="Red" className="ml-3 w-4">
          <Svg size={17} box={17}>
            <path d="M10 1.500H1v11h12V9M7 12.500v3M4 15.500h8M13 9v7.500M11 1.500h5v4a2 2 0 0 1-2 2h-1a2 2 0 0 1-2-2zM13.500 1.500v3" strokeWidth="1.300" />
          </Svg>
        </IconButton>
        <IconButton label="Volumen" className="ml-[7px] w-4">
          <Svg size={16} box={16}>
            <path d="M1 6h2.500L7 2.500v11L3.500 10H1zM9.500 6a3 3 0 0 1 0 4" strokeWidth="1.200" />
            <path d="M11.500 4a6 6 0 0 1 0 8M13.500 2.500a8 8 0 0 1 0 11" stroke="#77777a" strokeWidth="1.200" />
          </Svg>
        </IconButton>
        <button type="button" className="ml-3 w-[68px] text-right text-[11px] leading-4 whitespace-nowrap">
          10:41
          <br />
          11/11/2024
        </button>
        <IconButton label="Notificaciones" className="ml-[7px] w-4 text-[#8fe3ff]">
          <Bell size={16} fill="currentColor" />
        </IconButton>
      </div>
    </footer>
  );
}

export default function App() {
  return (
    <div className="flex h-screen flex-col overflow-hidden bg-[#b4b4b8] font-['Open_Sans','Segoe_UI',sans-serif] text-[#ededf0]">
      <div className="flex min-h-0 flex-1 flex-col overflow-hidden rounded-t-lg bg-[#1f1f23] pb-px">
        <TitleBar />
        <MenuBar />
        <ToolBar />
        <div className="flex min-h-0 flex-1 border-y border-[#333337]">
          <LeftRail />
          <DocumentArea />
          <AiPanel />
          <RightRail />
        </div>
      </div>
      <Taskbar />
    </div>
  );
}
